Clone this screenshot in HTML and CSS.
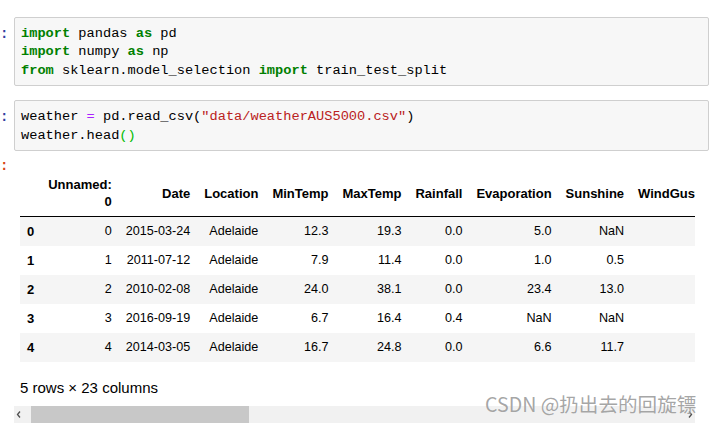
FILE: index.html
```html
<!DOCTYPE html>
<html lang="en">
<head>
<meta charset="utf-8">
<title>Notebook</title>
<link rel="stylesheet" href="styles.css">
</head>
<body>
<div class="nb">
  <div class="cell">
    <div class="prompt in-prompt">:</div>
    <div class="input"><span class="kw">import</span> pandas <span class="kw">as</span> pd
<span class="kw">import</span> numpy <span class="kw">as</span> np
<span class="kw">from</span> sklearn.model_selection <span class="kw">import</span> train_test_split</div>
  </div>
  <div class="cell cell2">
    <div class="prompt in-prompt">:</div>
    <div class="input">weather <span class="op">=</span> pd.read_csv(<span class="str">"data/weatherAUS5000.csv"</span>)
weather.head<span class="mb">()</span></div>
  </div>
  <div class="cell out-cell">
    <div class="prompt out-prompt">:</div>
    <div class="out">
      <div class="scroll">
        <table class="df">
          <thead>
            <tr>
              <th></th>
              <th class="wrap">Unnamed: 0</th>
              <th>Date</th><th>Location</th><th>MinTemp</th><th>MaxTemp</th><th>Rainfall</th><th>Evaporation</th><th>Sunshine</th><th>WindGustDir</th><th>WindGustSpeed</th><th>WindDir9am</th><th>WindDir3pm</th><th>WindSpeed9am</th><th>WindSpeed3pm</th><th>Humidity9am</th><th>Humidity3pm</th><th>Pressure9am</th><th>Pressure3pm</th><th>Cloud9am</th><th>Cloud3pm</th><th>Temp9am</th><th>Temp3pm</th><th>RainTomorrow</th>
            </tr>
          </thead>
          <tbody>
            <tr><th>0</th><td>0</td><td>2015-03-24</td><td>Adelaide</td><td>12.3</td><td>19.3</td><td>0.0</td><td>5.0</td><td>NaN</td><td>S</td><td>39.0</td><td>S</td><td>SSW</td><td>17.0</td><td>20.0</td><td>56.0</td><td>49.0</td><td>1021.6</td><td>1020.0</td><td>NaN</td><td>NaN</td><td>16.3</td><td>18.6</td><td>No</td></tr>
            <tr><th>1</th><td>1</td><td>2011-07-12</td><td>Adelaide</td><td>7.9</td><td>11.4</td><td>0.0</td><td>1.0</td><td>0.5</td><td>N</td><td>20.0</td><td>NNE</td><td>NE</td><td>7.0</td><td>9.0</td><td>93.0</td><td>81.0</td><td>1030.3</td><td>1026.9</td><td>NaN</td><td>NaN</td><td>8.1</td><td>10.7</td><td>No</td></tr>
            <tr><th>2</th><td>2</td><td>2010-02-08</td><td>Adelaide</td><td>24.0</td><td>38.1</td><td>0.0</td><td>23.4</td><td>13.0</td><td>SE</td><td>39.0</td><td>NNE</td><td>SSE</td><td>13.0</td><td>15.0</td><td>28.0</td><td>13.0</td><td>1012.2</td><td>1009.0</td><td>NaN</td><td>NaN</td><td>30.0</td><td>36.9</td><td>No</td></tr>
            <tr><th>3</th><td>3</td><td>2016-09-19</td><td>Adelaide</td><td>6.7</td><td>16.4</td><td>0.4</td><td>NaN</td><td>NaN</td><td>N</td><td>31.0</td><td>N</td><td>NNE</td><td>15.0</td><td>13.0</td><td>76.0</td><td>53.0</td><td>1023.6</td><td>1019.3</td><td>NaN</td><td>NaN</td><td>10.5</td><td>15.4</td><td>No</td></tr>
            <tr><th>4</th><td>4</td><td>2014-03-05</td><td>Adelaide</td><td>16.7</td><td>24.8</td><td>0.0</td><td>6.6</td><td>11.7</td><td>S</td><td>37.0</td><td>SE</td><td>SSE</td><td>15.0</td><td>13.0</td><td>48.0</td><td>34.0</td><td>1017.7</td><td>1014.7</td><td>NaN</td><td>NaN</td><td>19.8</td><td>23.4</td><td>No</td></tr>
          </tbody>
        </table>
        <p class="summary">5 rows × 23 columns</p>
      </div>
      <div class="scrollbar">
        <div class="sb-btn"><svg width="17" height="17" viewBox="0 0 17 17"><polyline points="6,5.5 3.5,8.5 6,11.5" fill="none" stroke="#505050" stroke-width="1.3"/></svg></div>
        <div class="sb-thumb"></div>
        <div class="sb-track"></div>
        <div class="sb-btn"><svg width="17" height="17" viewBox="0 0 17 17"><polyline points="11,5.5 13.5,8.5 11,11.5" fill="none" stroke="#505050" stroke-width="1.3"/></svg></div>
      </div>
    </div>
  </div>
</div>
<div class="watermark">CSDN @扔出去的回旋镖</div>
</body>
</html>
```
FILE: styles.css
```css
html, body {
  margin: 0;
  padding: 0;
  background: #fff;
}
body {
  width: 712px;
  height: 423px;
  overflow: hidden;
  position: relative;
  font-family: "Liberation Sans", Arial, sans-serif;
  color: #000;
}
.nb {
  padding-top: 17px;
}
.cell {
  display: flex;
  align-items: flex-start;
}
.cell2 {
  margin-top: 14px;
}
.prompt {
  flex: none;
  width: 14px;
  font-family: "Liberation Mono", monospace;
  font-size: 14px;
  font-weight: bold;
}
.in-prompt {
  color: #303f9f;
  padding-top: 8px;
  line-height: 18.4px;
}
.out-prompt {
  color: #d84315;
  line-height: 17px;
}
.input {
  flex: none;
  width: 695px;
  box-sizing: border-box;
  border: 1px solid #cfcfcf;
  border-radius: 2px;
  background: #f7f7f7;
  padding: 7px 6px 5px;
  font-family: "Liberation Mono", monospace;
  font-size: 13.67px;
  line-height: 18.4px;
  white-space: pre;
  color: #000;
}
.kw {
  color: #008000;
  font-weight: bold;
}
.op {
  color: #aa22ff;
}
.str {
  color: #ba2121;
}
.mb {
  color: #00bb00;
}
.out-cell {
  margin-top: 7px;
}
.out {
  flex: none;
  width: 681px;
}
.scroll {
  overflow: hidden;
  padding: 13px 0 0 6px;
}
.df {
  border-collapse: collapse;
  border-spacing: 0;
  font-size: 12.6px;
}
.df th, .df td {
  white-space: nowrap;
  text-align: right;
  vertical-align: middle;
  padding: 6px 7px;
  line-height: 17px;
}
.df thead th {
  font-size: 13px;
  font-weight: bold;
  padding: 5px 7px 6px;
  border-bottom: 1px solid #000;
}
.df thead th.wrap {
  white-space: normal;
  width: 1px;
}
.df tbody th {
  font-size: 13px;
  font-weight: bold;
  text-align: left;
}
.df tbody tr:nth-child(odd) {
  background: #f5f5f5;
}
.summary {
  margin: 17px 0 0;
  font-size: 15px;
  line-height: 18px;
}
.scrollbar {
  display: flex;
  height: 17px;
  margin-top: 9px;
  background: #f1f1f1;
}
.sb-btn {
  flex: none;
  width: 17px;
  height: 17px;
}
.sb-btn svg {
  display: block;
}
.sb-thumb {
  flex: none;
  width: 218px;
  background: #c8c8c8;
}
.sb-track {
  flex: 1;
}
.watermark {
  position: absolute;
  left: 485px;
  top: 391px;
  font-family: "Noto Sans CJK SC", "Liberation Sans", sans-serif;
  font-size: 19.6px;
  line-height: 26px;
  color: rgba(150, 150, 150, 0.85);
  white-space: nowrap;
  text-shadow: 0 0 1px rgba(255, 255, 255, 0.6);
}
```
